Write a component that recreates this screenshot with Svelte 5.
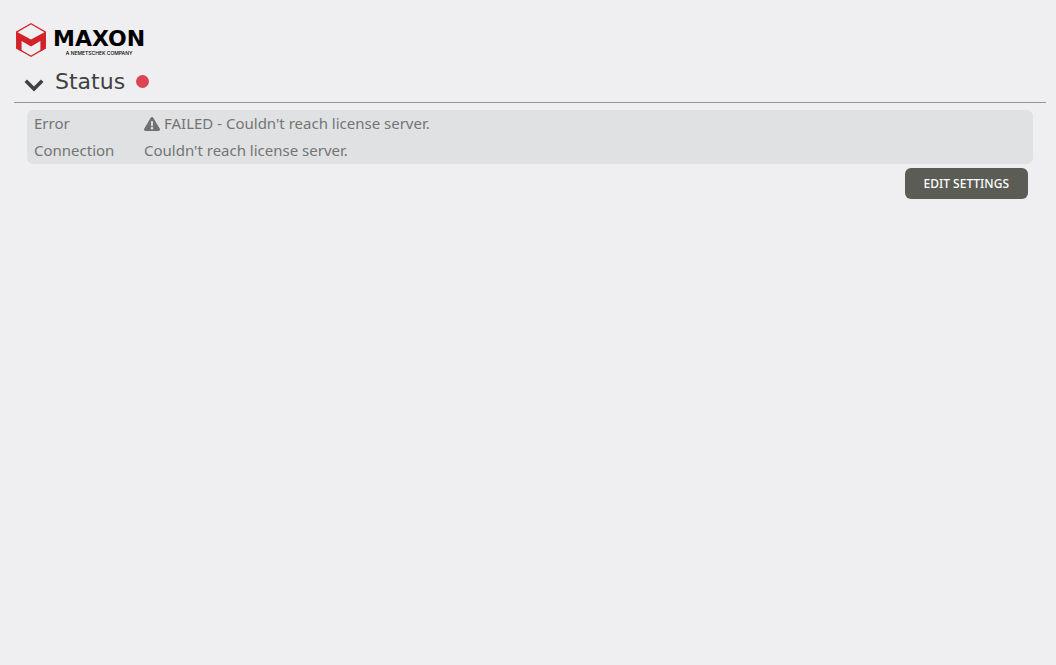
<script>
  let open = $state(true);
</script>

<main>
  <header class="brand">
    <svg class="mark" viewBox="0 0 32 36" aria-hidden="true">
      <path d="M16 1.800 30.200 10v16L16 34.200 1.800 26V10Z" fill="none" stroke="#d2232a" stroke-width="1.300" />
      <path d="M1.200 9.400 16 17.400 30.800 9.400v17L25.400 29.400V19L16 24.600 6.600 19v10.400L1.200 26.400Z" fill="#d2232a" />
    </svg>
    <div class="words">
      <span class="name">MAXON</span>
      <span class="tagline">A NEMETSCHEK COMPANY</span>
    </div>
  </header>

  <section>
    <h1>
      <button class="toggle" type="button" aria-expanded={open} aria-controls="status-panel" onclick={() => (open = !open)}>
        <svg class="chevron" class:closed={!open} viewBox="0 0 20 14" aria-hidden="true">
          <path d="M1.800 2.800 10 11 18.200 2.800" fill="none" stroke="#3f4240" stroke-width="3.600" />
        </svg>
        <span>Status</span>
        <span class="dot"></span>
      </button>
    </h1>

    {#if open}
      <div class="content" id="status-panel">
        <dl class="panel">
          <dt>Error</dt>
          <dd>
            <svg class="warning" viewBox="0 0 16 14" aria-hidden="true">
              <path fill-rule="evenodd" d="M6.700.8C7.300-.2 8.700-.2 9.300.8l6.500 11c.6 1-.1 2.200-1.300 2.200h-13C.3 14-.4 12.800.2 11.800ZM6.900 4.300l.3 4.900h1.600l.3-4.900ZM8 10a1.300 1.300 0 1 0 0 2.600A1.300 1.300 0 0 0 8 10Z" fill="#6f7170" />
            </svg>
            FAILED - Couldn't reach license server.
          </dd>
          <dt>Connection</dt>
          <dd>Couldn't reach license server.</dd>
        </dl>
        <div class="actions">
          <button class="edit" type="button">EDIT SETTINGS</button>
        </div>
      </div>
    {/if}
  </section>
</main>

<style>
  :global(body) {
    margin: 0;
    background: #efeff1;
  }
  main {
    padding: 22px 10px 0 14px;
    font-family: "Noto Sans", sans-serif;
    font-size: 15px;
    color: #737574;
  }
  .brand {
    display: flex;
    align-items: center;
    gap: 6px;
    height: 36px;
    padding-left: 1px;
  }
  .mark {
    width: 32px;
    height: 36px;
  }
  .words {
    display: flex;
    flex-direction: column;
    align-items: center;
    padding-top: 4px;
    color: #000;
  }
  .name {
    font-family: "DejaVu Sans", sans-serif;
    font-size: 22px;
    line-height: 22px;
    font-weight: 700;
  }
  .tagline {
    font-family: Inter, sans-serif;
    font-size: 5px;
    line-height: 6px;
    font-weight: 500;
  }
  h1 {
    margin: 0;
    height: 44px;
    border-bottom: 1px solid #939596;
    font-weight: 400;
  }
  .toggle {
    display: flex;
    align-items: center;
    gap: 11px;
    height: 46px;
    padding: 0 10px;
    border: 0;
    background: none;
    font-family: "DejaVu Sans", sans-serif;
    font-size: 22px;
    color: #3f4240;
    cursor: pointer;
  }
  .chevron {
    width: 20px;
    height: 14px;
    margin-top: 8px;
  }
  .closed {
    transform: rotate(-90deg);
  }
  .dot {
    width: 13px;
    height: 13px;
    border-radius: 50%;
    background: #da4453;
  }
  .content {
    padding: 7px 13px 0;
  }
  .panel {
    display: grid;
    grid-template-columns: 110px 1fr;
    margin: 0;
    padding: 0 7px;
    border-radius: 6px;
    background: #e0e1e3;
    line-height: 27px;
  }
  dd {
    display: flex;
    align-items: center;
    gap: 4px;
    margin: 0;
  }
  .warning {
    width: 16px;
    height: 14px;
  }
  .actions {
    display: flex;
    justify-content: flex-end;
    padding: 4px 5px 0;
  }
  .edit {
    height: 31px;
    padding: 0 19px;
    border: 0;
    border-radius: 6px;
    background: #5b5c55;
    color: #fff;
    font-family: inherit;
    font-size: 12px;
    font-weight: 500;
    cursor: pointer;
  }
</style>
